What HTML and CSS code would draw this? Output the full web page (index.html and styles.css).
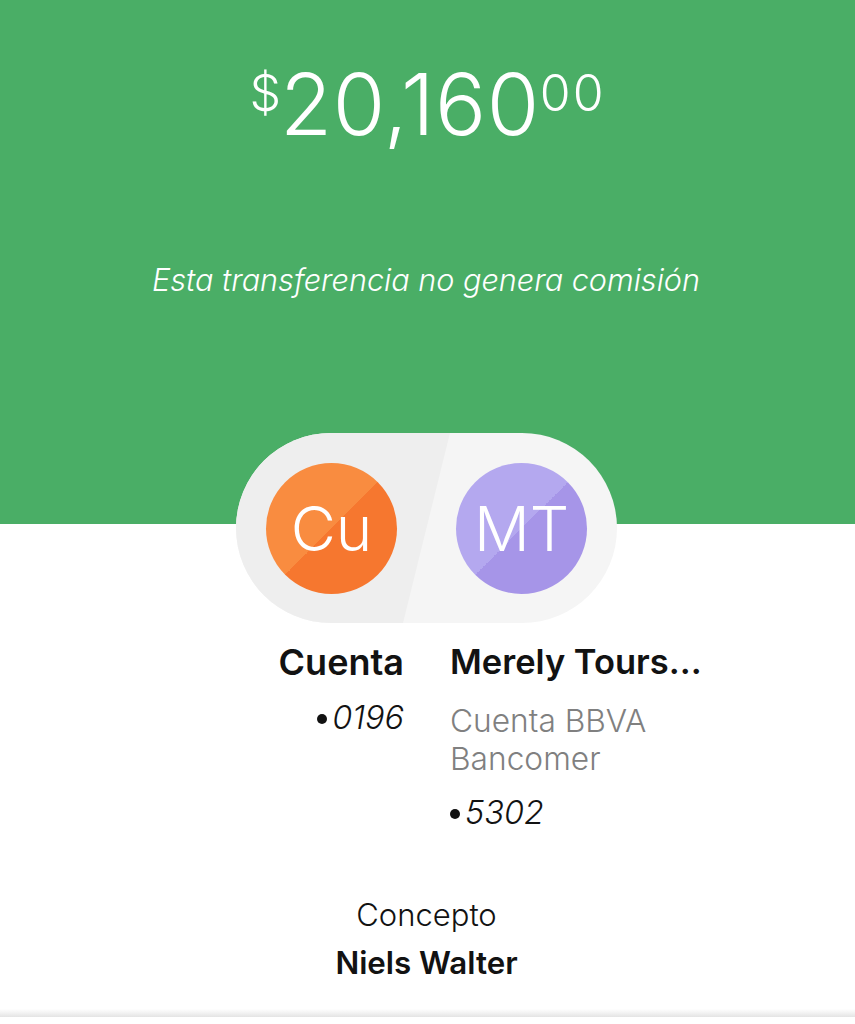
FILE: index.html
```html
<!DOCTYPE html>
<html lang="es">
<head>
    <meta charset="UTF-8">
    <meta name="viewport" content="width=device-width, initial-scale=1.0">
    <title>Transferencia</title>
    <link rel="stylesheet" href="styles.css">
</head>
<body>
    <header class="hero">
        <div class="amount"><sup class="currency">$</sup>20,160<sup class="cents">00</sup></div>
        <p class="fee-note">Esta transferencia no genera comisión</p>
    </header>
    <main>
        <div class="pill">
            <div class="avatar avatar-orange">Cu</div>
            <div class="avatar avatar-purple">MT</div>
        </div>
        <div class="accounts">
            <div class="account account-from">
                <h2>Cuenta</h2>
                <p class="account-number"><span class="dot"></span>0196</p>
            </div>
            <div class="account account-to">
                <h2>Merely Tours...</h2>
                <p class="bank">Cuenta BBVA<br>Bancomer</p>
                <p class="account-number"><span class="dot"></span>5302</p>
            </div>
        </div>
        <div class="concept">
            <p class="concept-label">Concepto</p>
            <p class="concept-value">Niels Walter</p>
        </div>
    </main>
    <div class="bottom-edge"></div>
</body>
</html>
```

FILE: styles.css
```css
* {
    box-sizing: border-box;
}

body {
    margin: 0;
    background-color: #fff;
    color: #121212;
    font-family: Inter, "Liberation Sans", sans-serif;
}

p, h2 {
    margin: 0;
}

/* Green top block */
.hero {
    height: 524px;
    padding-top: 57px;
    background-color: #4aae66;
    color: #fff;
    text-align: center;
}

.amount {
    height: 96px;
    font-size: 85px;
    line-height: 96px;
    font-weight: 300;
    letter-spacing: 0.6px;
    white-space: nowrap;
}

.amount sup {
    font-size: 50px;
    line-height: 0;
    vertical-align: 24px;
    letter-spacing: 2px;
}

.amount .currency {
    letter-spacing: -1px;
}

.fee-note {
    margin-top: 107px;
    margin-right: 3px;
    font-size: 30.6px;
    line-height: 40px;
    font-style: italic;
    font-weight: 300;
}

/* Two-tone pill with the avatars */
.pill {
    position: relative;
    display: flex;
    justify-content: space-between;
    align-items: center;
    width: 381px;
    height: 190px;
    margin: -91px 0 0 236px;
    padding: 0 30px;
    border-radius: 95px;
    background-color: #f5f5f5;
    overflow: hidden;
}

.pill::before {
    content: "";
    position: absolute;
    top: 0;
    left: 0;
    width: 214px;
    height: 190px;
    background-color: #eee;
    clip-path: polygon(0 0, 100% 0, 167px 100%, 0 100%);
}

.avatar {
    position: relative;
    width: 131px;
    height: 131px;
    border-radius: 50%;
    color: #fff;
    font-size: 62px;
    font-weight: 300;
    line-height: 131px;
    text-align: center;
}

.avatar-orange {
    background: linear-gradient(135deg, #f98c40 50%, #f6772f 50%);
}

.avatar-purple {
    background: linear-gradient(135deg, #b4a8ef 50%, #a695e8 50%);
}

/* Account columns */
.accounts {
    display: grid;
    grid-template-columns: 404px 1fr;
    column-gap: 46px;
    margin-top: 17px;
}

.account h2 {
    font-size: 34.5px;
    line-height: 44px;
    font-weight: 600;
    white-space: nowrap;
}

.account-from {
    text-align: right;
}

.account-from h2 {
    font-size: 36px;
}

.account-number {
    font-size: 32.5px;
    line-height: 40px;
    font-style: italic;
    font-weight: 300;
}

.account-from .account-number {
    margin-top: 14px;
}

.account-to .account-number {
    margin-top: 15px;
}

.dot {
    display: inline-block;
    width: 10px;
    height: 10px;
    margin-right: 5px;
    border-radius: 50%;
    background-color: #121212;
    vertical-align: 5px;
}

.bank {
    margin-top: 18px;
    color: #808080;
    font-size: 31.7px;
    line-height: 38px;
    font-weight: 300;
}

/* Concepto */
.concept {
    margin-top: 60px;
    padding-right: 2px;
    text-align: center;
}

.concept-label {
    font-size: 31px;
    line-height: 44px;
    font-weight: 300;
}

.concept-value {
    margin-top: 4px;
    font-size: 31.3px;
    line-height: 44px;
    font-weight: 600;
}

.bottom-edge {
    height: 8px;
    margin-top: 24px;
    background: linear-gradient(#fff, #e4e4e4);
}
```
